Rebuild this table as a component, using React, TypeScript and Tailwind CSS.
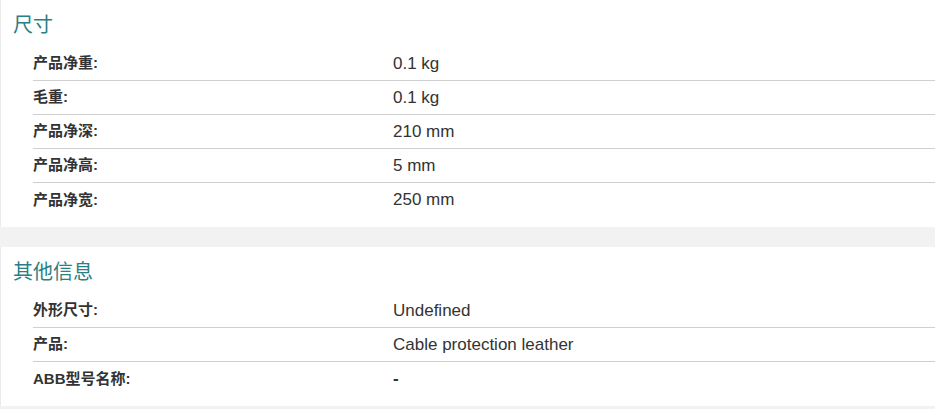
const sections = [
  {
    title: '尺寸',
    rows: [
      { label: '产品净重:', value: '0.1 kg' },
      { label: '毛重:', value: '0.1 kg' },
      { label: '产品净深:', value: '210 mm' },
      { label: '产品净高:', value: '5 mm' },
      { label: '产品净宽:', value: '250 mm' },
    ],
  },
  {
    title: '其他信息',
    rows: [
      { label: '外形尺寸:', value: 'Undefined' },
      { label: '产品:', value: 'Cable protection leather' },
      { label: 'ABB型号名称:', value: '-' },
    ],
  },
]

export default function App() {
  return (
    <div
      className="min-h-[409px] w-[935px] overflow-hidden bg-[#f2f2f2]"
      style={{ fontFamily: '"Liberation Sans", "Noto Sans CJK SC", sans-serif' }}
    >
      <div className="flex flex-col gap-5">
        {sections.map((section) => (
          <section key={section.title} className="border-l border-[#ebebeb] bg-white pb-[10px]">
            {/* Section heading */}
            <h2 className="pl-[12px] pt-[11px] pb-2 text-[20px] leading-[28px] text-[#2a7f84]">
              {section.title}
            </h2>

            <dl className="pl-[32px]">
              {section.rows.map((row, i) => (
                <div
                  key={row.label}
                  className={`flex h-[34px] items-center ${
                    i < section.rows.length - 1 ? 'border-b border-[#d0d0d0]' : ''
                  }`}
                >
                  <dt className="w-[360px] text-[15px] font-bold text-[#333]">{row.label}</dt>
                  <dd className={`text-[17px] text-[#333] ${row.value === '-' ? 'font-bold' : ''}`}>
                    {row.value}
                  </dd>
                </div>
              ))}
            </dl>
          </section>
        ))}
      </div>
    </div>
  )
}
